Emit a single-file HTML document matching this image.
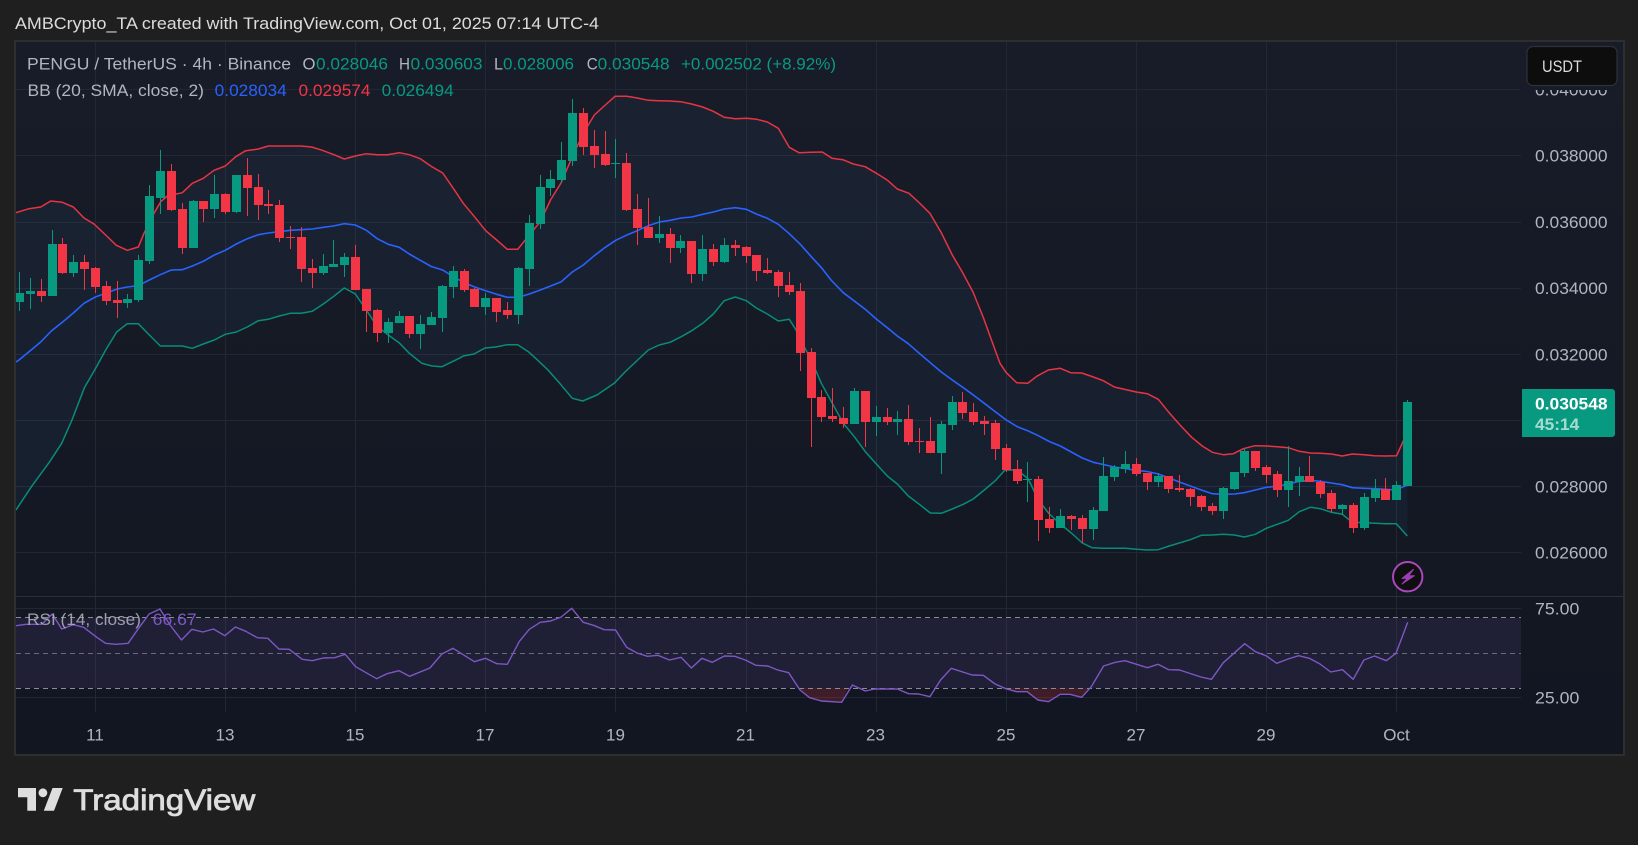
<!DOCTYPE html>
<html><head><meta charset="utf-8"><title>PENGU / TetherUS</title>
<style>
html,body{margin:0;padding:0;background:#1f1f1f;width:1638px;height:845px;overflow:hidden}
svg{display:block}
text{font-family:"Liberation Sans",sans-serif;font-size:17px;fill:#b2b5be}
.g{fill:#089981}.r{fill:#f23645}.b{fill:#2962ff}
</style></head><body>
<svg xmlns="http://www.w3.org/2000/svg" width="1638" height="845" viewBox="0 0 1638 845">
<defs>
<linearGradient id="bg" x1="0" y1="0" x2="0" y2="1"><stop offset="0" stop-color="#181c28"/><stop offset="1" stop-color="#111621"/></linearGradient>
<clipPath id="c"><rect x="16" y="42" width="1505" height="554"/></clipPath>
<clipPath id="c2"><rect x="16" y="597" width="1505" height="116"/></clipPath>
<clipPath id="c3"><rect x="1525" y="90" width="96" height="20"/></clipPath>
</defs>
<rect width="1638" height="845" fill="#1f1f1f"/>
<text x="15" y="29" textLength="584" lengthAdjust="spacingAndGlyphs" style="fill:#dcdcdc">AMBCrypto_TA created with TradingView.com, Oct 01, 2025 07:14 UTC-4</text>
<rect x="15" y="41" width="1609" height="714" fill="url(#bg)" stroke="#2e2e2e" stroke-width="2"/>
<!-- grid -->
<path shape-rendering="crispEdges" fill="none" stroke="#232733" stroke-width="1" d="M16 89.5H1521M16 155.5H1521M16 222.5H1521M16 288.5H1521M16 354.5H1521M16 420.5H1521M16 486.5H1521M16 552.5H1521M16 608.5H1521M16 697.5H1521M95.5 42V712M225.5 42V712M355.5 42V712M485.5 42V712M615.5 42V712M746.5 42V712M876.5 42V712M1006.5 42V712M1136.5 42V712M1266.5 42V712M1396.5 42V712"/>
<path shape-rendering="crispEdges" d="M16 596.5H1623" stroke="#2c303b" stroke-width="1"/>
<!-- band fill -->
<g clip-path="url(#c)">
<polygon fill="#5aa0e8" fill-opacity=".06" points="16,212.6 29,208.7 40.7,207 50.7,201 62.3,202.3 73.3,207 84,218 94,224 105.7,235 116.3,245.3 127.3,250.3 138.3,247 144,233.3 154,213.3 160.7,201.7 167.3,196 182.3,192.7 192.3,183.3 203.3,178.3 214,170.3 225.3,166 235.7,156.7 245.7,150.7 258.3,149 268.3,146 300.7,146 311.7,147 322.3,150.3 334,154.7 344.3,159 355.3,156 366.3,153.7 377.3,154.7 387.3,154.7 399.3,152.7 409.3,154.7 420.3,158.7 431.3,166.4 442.7,173 453.3,188.3 463.3,203.3 475,217.3 485.7,230.7 496.7,240 507.3,249.3 517.7,249.3 529.3,235 540.3,221.7 550.5,200 561,183 572.3,156.7 583.3,133.3 594.3,115 605.3,105 615,96.3 626.7,96.3 637.3,98 648.3,100.3 659.3,100.7 670,101 680.7,101.7 691.7,104 702.7,107 713.3,111.3 724.3,117.3 735.3,118.7 746.7,118.3 756.7,119.3 767.3,122 778.3,128.3 789.3,147.3 799,152.7 811.3,152.3 822.3,152 832,158.3 842.8,159.7 853.4,164 865.2,166.7 876.4,173.3 887.1,180 897.3,189 909,193.3 919.5,203 929.9,213.3 941.6,233.3 952.3,255 963,273.3 973,292 983.5,318 993.3,345 1000,363.3 1006,372.3 1016.7,382.7 1027.7,383.3 1036.7,376.3 1048.3,370 1060.3,368.3 1070.7,372.7 1081.7,373 1092,376.5 1103.3,380.7 1114.3,387 1125.3,389.5 1136.3,392 1147.3,393.7 1158.3,399.3 1168.3,411.7 1180,425 1191.7,437.3 1202.3,446 1212.3,452.3 1223.3,454.7 1233.3,453.7 1243.3,448.7 1255,445.7 1266.7,446 1277.3,446.7 1288.3,447.7 1299.3,451.3 1310.3,453 1320.3,453.3 1331.3,454 1342.3,456 1352.3,454 1364.3,454.7 1374.3,455.7 1385.3,456 1396.5,455.8 1403.3,441 1407.5,429 1407.3,536 1396.3,523.7 1385.3,523.7 1375.3,523.3 1364.3,522.7 1352.3,522.3 1342.3,514.3 1331.3,512.3 1320.3,508.7 1310.3,507.3 1299.3,511.7 1288.3,520.3 1277.3,524.3 1266.3,528.3 1255.3,534.3 1244.3,537 1234.3,535 1223.3,534.3 1212.3,535 1201.3,535.3 1190.3,539.7 1179.3,543 1169.3,546 1158.3,549.7 1147.3,550 1136.3,549.3 1125.3,548.3 1103.3,548.3 1092,547.7 1082.3,543 1071.3,533 1060.3,524 1049.3,514 1038.3,500 1028.3,479 1017.3,470 1005,470 995.3,480.7 984.3,490 973.3,499 963.3,504.3 952.3,509 941.3,513.3 930.3,513 919.3,504.3 908.3,496 897.3,484 887.3,476 876.3,464 865.3,451.7 854.3,436.7 843.3,423.3 832.3,403.3 821.3,383.3 811.3,360 805,348.3 796,330 789.3,319.3 778.3,321 767.3,314 756.3,308 746.3,300.7 735.3,297 724.3,300.7 713.3,314 702.7,323.3 691.7,330.7 681.3,336.7 670,342.3 659.3,345 648.3,350 637.7,360 625,372 614.2,383.3 597,395 582.7,401 572.3,398.3 559.7,383.3 548,370 536.7,359.3 528.3,351.7 517.7,344.7 507.3,344.7 496,347 485,348 474,354 463.3,356 459.2,358.3 442,366.7 432,366 421.9,363.3 409.3,353.3 399.3,343 388.3,335 377.3,326.7 366.3,310 355.3,294 344.3,288 333.3,296.7 323.3,304 312.3,311.3 301.3,313.3 290.3,313.3 279.3,316 268.3,319.3 258.3,320.7 247.3,327 236.3,332 225.3,334.3 214.3,340 203.3,344 192.3,348.3 182.3,346 160.3,346 149.3,335 138.3,323.7 127.3,323.7 116.7,332 105.7,350 94.7,370 84.4,387.7 72,420 61.7,443.3 49.7,461.7 31.4,486.7 16,510"/>
<!-- lower -->
<polyline fill="none" stroke="#089981" stroke-width="1.5" stroke-opacity=".9" stroke-linejoin="round" points="16,510 31.4,486.7 49.7,461.7 61.7,443.3 72,420 84.4,387.7 94.7,370 105.7,350 116.7,332 127.3,323.7 138.3,323.7 149.3,335 160.3,346 182.3,346 192.3,348.3 203.3,344 214.3,340 225.3,334.3 236.3,332 247.3,327 258.3,320.7 268.3,319.3 279.3,316 290.3,313.3 301.3,313.3 312.3,311.3 323.3,304 333.3,296.7 344.3,288 355.3,294 366.3,310 377.3,326.7 388.3,335 399.3,343 409.3,353.3 421.9,363.3 432,366 442,366.7 459.2,358.3 463.3,356 474,354 485,348 496,347 507.3,344.7 517.7,344.7 528.3,351.7 536.7,359.3 548,370 559.7,383.3 572.3,398.3 582.7,401 597,395 614.2,383.3 625,372 637.7,360 648.3,350 659.3,345 670,342.3 681.3,336.7 691.7,330.7 702.7,323.3 713.3,314 724.3,300.7 735.3,297 746.3,300.7 756.3,308 767.3,314 778.3,321 789.3,319.3 796,330 805,348.3 811.3,360 821.3,383.3 832.3,403.3 843.3,423.3 854.3,436.7 865.3,451.7 876.3,464 887.3,476 897.3,484 908.3,496 919.3,504.3 930.3,513 941.3,513.3 952.3,509 963.3,504.3 973.3,499 984.3,490 995.3,480.7 1005,470 1017.3,470 1028.3,479 1038.3,500 1049.3,514 1060.3,524 1071.3,533 1082.3,543 1092,547.7 1103.3,548.3 1125.3,548.3 1136.3,549.3 1147.3,550 1158.3,549.7 1169.3,546 1179.3,543 1190.3,539.7 1201.3,535.3 1212.3,535 1223.3,534.3 1234.3,535 1244.3,537 1255.3,534.3 1266.3,528.3 1277.3,524.3 1288.3,520.3 1299.3,511.7 1310.3,507.3 1320.3,508.7 1331.3,512.3 1342.3,514.3 1352.3,522.3 1364.3,522.7 1375.3,523.3 1385.3,523.7 1396.3,523.7 1407.3,536"/>
<!-- upper -->
<polyline fill="none" stroke="#f23645" stroke-width="1.5" stroke-opacity=".95" stroke-linejoin="round" points="16,212.6 29,208.7 40.7,207 50.7,201 62.3,202.3 73.3,207 84,218 94,224 105.7,235 116.3,245.3 127.3,250.3 138.3,247 144,233.3 154,213.3 160.7,201.7 167.3,196 182.3,192.7 192.3,183.3 203.3,178.3 214,170.3 225.3,166 235.7,156.7 245.7,150.7 258.3,149 268.3,146 300.7,146 311.7,147 322.3,150.3 334,154.7 344.3,159 355.3,156 366.3,153.7 377.3,154.7 387.3,154.7 399.3,152.7 409.3,154.7 420.3,158.7 431.3,166.4 442.7,173 453.3,188.3 463.3,203.3 475,217.3 485.7,230.7 496.7,240 507.3,249.3 517.7,249.3 529.3,235 540.3,221.7 550.5,200 561,183 572.3,156.7 583.3,133.3 594.3,115 605.3,105 615,96.3 626.7,96.3 637.3,98 648.3,100.3 659.3,100.7 670,101 680.7,101.7 691.7,104 702.7,107 713.3,111.3 724.3,117.3 735.3,118.7 746.7,118.3 756.7,119.3 767.3,122 778.3,128.3 789.3,147.3 799,152.7 811.3,152.3 822.3,152 832,158.3 842.8,159.7 853.4,164 865.2,166.7 876.4,173.3 887.1,180 897.3,189 909,193.3 919.5,203 929.9,213.3 941.6,233.3 952.3,255 963,273.3 973,292 983.5,318 993.3,345 1000,363.3 1006,372.3 1016.7,382.7 1027.7,383.3 1036.7,376.3 1048.3,370 1060.3,368.3 1070.7,372.7 1081.7,373 1092,376.5 1103.3,380.7 1114.3,387 1125.3,389.5 1136.3,392 1147.3,393.7 1158.3,399.3 1168.3,411.7 1180,425 1191.7,437.3 1202.3,446 1212.3,452.3 1223.3,454.7 1233.3,453.7 1243.3,448.7 1255,445.7 1266.7,446 1277.3,446.7 1288.3,447.7 1299.3,451.3 1310.3,453 1320.3,453.3 1331.3,454 1342.3,456 1352.3,454 1364.3,454.7 1374.3,455.7 1385.3,456 1396.5,455.8 1403.3,441 1407.5,429"/>
<!-- middle -->
<polyline fill="none" stroke="#2962ff" stroke-width="1.6" stroke-linejoin="round" points="16,362 19,360 29,351.7 40.7,342 51.3,331 62.3,322.3 73.3,313 84,303.3 95.3,297 106.3,293 117.3,289 127.3,287 138.3,285.7 149.3,280 160.3,274.7 171.3,270 182.3,269.7 192.3,266 203.3,261.3 214.3,255 225.3,250.3 236.3,244 247.3,238.7 258.3,234.7 268.3,233 279.3,231.7 290.3,230.3 301.3,229.7 312.3,229 323.3,227.3 333.3,226 344.3,223.7 355.3,225 366.3,230.3 377.3,238.7 388.3,244.3 399.3,247.3 409.3,254 420.3,260.3 431.3,266.5 442.7,270 453.3,276.7 464.3,282.7 474.7,287 485.7,290.7 496.7,294.3 507.3,297.3 518.3,297.3 529.3,294 540.3,290 550.7,286 561.3,281.7 572.3,272 583.3,265 594.3,255.7 605.3,247.3 615.7,240.3 626.3,235.3 637.3,230.7 648.3,225.7 659.3,222 670.3,220.3 681.3,218 691.7,217 702.7,214.3 713.3,212 724.3,209 735.3,207.7 746.3,209.3 756.3,214 767.3,218.3 778.3,224.3 789.3,233.7 800.3,244.3 811.3,256.7 822.3,268.7 831,280 843.3,292.7 854.3,301 865.3,309.3 876.3,319 887.3,327.7 897.3,336 908.3,343.7 919.3,353.3 930.3,362.7 941.3,372 952.3,380 963.3,387.7 973.3,395 984.3,403.3 995.3,411.7 1006.3,420 1017.3,426.7 1028.3,431 1038.3,435.7 1049.3,441.5 1060.3,446 1071.3,452 1082.3,458 1093.3,462.3 1103.3,464.5 1114.3,467 1125.3,468.5 1136.3,470.5 1147.3,471.5 1158.3,474 1169.3,478 1179.3,482 1190.3,486 1201.3,490 1212.3,493.7 1223.3,494.3 1234.3,494 1244.3,492.7 1255.3,490 1266.3,487.3 1277.3,486.3 1288.3,484 1299.3,481.3 1310.3,480.3 1320.3,481.3 1331.3,483 1342.3,484.7 1352.3,487.7 1364.3,488.3 1375.3,488.7 1385.3,489.3 1396.3,490 1403.3,486.7 1407.3,485.3"/>
<!-- candles -->
<g shape-rendering="crispEdges" fill="none">
<path stroke="#089981" stroke-width="1" d="M19.5 272V311M30.5 278V309M52.5 230V296M73.5 255V277M127.5 294V308M138.5 255V302M149.5 185V264M160.5 150V214M193.5 200V248M214.5 175V218M236.5 175V213M323.5 254V275M333.5 240V267M344.5 253V277M388.5 318V343M399.5 311V323M420.5 315V349M431.5 312V325M442.5 285V332M453.5 266V298M485.5 293V315M518.5 267V324M529.5 215V286M540.5 175V229M550.5 170V196M561.5 142V183M572.5 99V166M615.5 139V178M659.5 216V243M680.5 235V253M702.5 235V281M724.5 238V263M854.5 388V424M876.5 406V436M897.5 411V435M941.5 421V474M952.5 396V430M1027.5 462V502M1060.5 509V528M1093.5 507V540M1103.5 457V511M1114.5 465V481M1125.5 451V473M1158.5 473V487M1223.5 487V519M1234.5 472V490M1244.5 448V477M1288.5 446V507M1299.5 467V496M1342.5 504V515M1364.5 493V530M1375.5 479V502M1396.5 481V500M1407.5 400V486"/>
<path stroke="#f23645" stroke-width="1" d="M41.5 279V302M62.5 238V274M84.5 255V290M95.5 267V293M106.5 281V305M117.5 281V318M171.5 164V211M182.5 203V254M203.5 201V222M225.5 193V214M247.5 158V216M258.5 174V220M268.5 190V214M279.5 200V242M290.5 226V249M301.5 227V282M312.5 259V288M355.5 245V290M366.5 289V332M377.5 309V342M409.5 316V338M464.5 269V292M474.5 288V307M496.5 298V322M507.5 302V319M583.5 108V155M594.5 130V168M605.5 131V166M626.5 153V211M637.5 194V245M648.5 198V238M670.5 228V263M691.5 241V283M713.5 244V266M735.5 240V256M746.5 246V263M756.5 255V281M767.5 258V274M778.5 270V297M789.5 272V295M800.5 283V371M811.5 348V447M821.5 390V422M832.5 388V422M843.5 407V428M865.5 391V447M887.5 408V425M908.5 405V445M919.5 428V453M930.5 417V453M962.5 392V419M973.5 403V425M984.5 416V435M995.5 420V460M1006.5 444V472M1017.5 460V484M1038.5 476V541M1049.5 507V533M1071.5 515V530M1082.5 515V543M1136.5 458V476M1147.5 473V490M1168.5 476V493M1179.5 475V492M1190.5 488V506M1201.5 495V511M1212.5 503V515M1255.5 451V471M1266.5 465V483M1277.5 471V497M1309.5 456V482M1320.5 480V498M1331.5 490V512M1353.5 503V533M1385.5 478V500"/>
<path stroke="#089981" stroke-width="9" d="M19.5 293V302M30.5 291V294M52.5 244V296M73.5 262V273M127.5 299V303M138.5 260V300M149.5 196V261M160.5 171V198M193.5 201V248M214.5 194V209M236.5 175V212M323.5 266V273M333.5 264V267M344.5 257V265M388.5 322V333M399.5 316V323M420.5 324V334M431.5 317V325M442.5 286V318M453.5 271V287M485.5 298V307M518.5 268V315M529.5 223V269M540.5 187V224M550.5 179V188M561.5 160V180M572.5 113V161M615.5 163V164M659.5 234V238M680.5 241V248M702.5 249V274M724.5 245V262M854.5 391V424M876.5 417V422M897.5 419V422M941.5 424V453M952.5 402V425M1027.5 479V480M1060.5 516V528M1093.5 510V529M1103.5 476V511M1114.5 467V477M1125.5 464V469M1158.5 476V482M1223.5 488V511M1234.5 472V489M1244.5 451V473M1288.5 481V490M1299.5 476V482M1342.5 505V509M1364.5 497V528M1375.5 489V498M1396.5 485V500M1407.5 402V486"/>
<path stroke="#f23645" stroke-width="9" d="M41.5 291V296M62.5 244V273M84.5 262V269M95.5 268V287M106.5 286V301M117.5 300V303M171.5 171V210M182.5 209V248M203.5 201V209M225.5 194V212M247.5 175V188M258.5 187V205M268.5 204V206M279.5 205V238M290.5 237V238M301.5 237V269M312.5 268V273M355.5 257V290M366.5 289V311M377.5 310V333M409.5 316V334M464.5 271V290M474.5 289V307M496.5 298V312M507.5 310V315M583.5 113V147M594.5 146V155M605.5 154V165M626.5 163V210M637.5 209V228M648.5 227V238M670.5 234V248M691.5 241V274M713.5 249V262M735.5 245V248M746.5 247V256M756.5 255V271M767.5 270V273M778.5 272V286M789.5 285V292M800.5 291V353M811.5 352V398M821.5 397V417M832.5 416V419M843.5 418V424M865.5 391V422M887.5 417V422M908.5 419V442M919.5 441V442M930.5 441V453M962.5 402V413M973.5 412V422M984.5 421V424M995.5 423V449M1006.5 448V470M1017.5 469V481M1038.5 479V520M1049.5 519V528M1071.5 516V519M1082.5 518V529M1136.5 464V474M1147.5 473V482M1168.5 476V489M1179.5 488V490M1190.5 489V497M1201.5 496V507M1212.5 506V511M1255.5 451V468M1266.5 467V475M1277.5 474V490M1309.5 476V482M1320.5 482V494M1331.5 493V509M1353.5 505V528M1385.5 489V500"/>
</g>
</g>
<!-- RSI -->
<g clip-path="url(#c2)">
<rect x="16" y="618" width="1505" height="70" fill="#7e57c2" fill-opacity=".13"/>
<polygon fill="#f23645" fill-opacity=".2" points="797,688 809.6,697.7 821.4,701 841.7,702.3 848,688"/>
<polygon fill="#f23645" fill-opacity=".2" points="1005,688 1016.5,691.7 1027.2,691.7 1037.8,700 1048.5,701.7 1060.3,694.3 1069.9,694.3 1081.7,697.3 1091.3,688"/>
<path shape-rendering="crispEdges" fill="none" stroke="#8b8b96" stroke-width="1" stroke-dasharray="5 4" d="M16 617.5H1521M16 688.5H1521"/>
<path shape-rendering="crispEdges" fill="none" stroke="#6c6c78" stroke-width="1" stroke-dasharray="5 4" d="M16 653.5H1521"/>
<polyline fill="none" stroke="#7e57c2" stroke-width="1.4" stroke-linejoin="round" points="15.7,625.7 26,624.3 41.8,624.3 52.3,614 61.7,629 73.2,624.7 83.7,627.3 96.8,637.3 105.6,643.3 116.1,644.3 128.1,643.3 138.6,628.3 149.1,614 160,609 170,625 181.5,640 191.9,629.3 202.9,632 213.4,629 224.9,635.7 235.4,627 245.8,631.3 257.3,637.7 267.8,638.3 278.8,649 289.2,649.3 302.3,659.3 312.2,660.7 323.2,658 334.7,657.7 345.2,654.3 355.6,666.7 376.6,678.7 387,673.7 399.1,670.7 409.5,676.3 429.9,668 441.9,654 453,648.3 474.4,661.7 485.4,658.3 496.9,663.7 507.3,664.3 519.4,641.3 529.3,629.3 540.3,622.3 550.7,621 561.2,617 571.7,608.3 583.2,622.3 593.6,625.3 604.1,629.7 615.6,630 626.6,647.3 637,653 647.5,656.3 657.9,655.3 669.5,660 681,657.3 691.4,668 701.9,658.3 712.3,662.3 724.4,656 734.8,656.3 745.3,660 755.8,665.3 767.8,666 777.7,670 788.7,672.7 800,690 809.6,697.7 821.4,701 841.7,702.3 852.4,685 865.2,691 874.8,689 897.3,689 908.5,693.7 918.7,694 929.9,696.7 940.6,680 951.3,668.3 972.1,675 983.3,675.3 995.1,684 1005.8,688.7 1016.5,691.7 1027.2,691.7 1037.8,700 1048.5,701.7 1060.3,694.3 1069.9,694.3 1081.7,697.3 1091.3,686.7 1103.6,666 1115.3,662.3 1125,660.7 1147.4,667.7 1158.1,664.3 1168.8,669.7 1179.5,670 1200.9,677 1211.5,679.3 1223.3,662.7 1244.7,643.7 1255.4,651.7 1266.6,656 1276.7,663.3 1288,659 1298.7,655.7 1309.3,658.3 1320,664 1330.7,672 1342.5,669.7 1353.2,679.3 1363.9,660 1374.5,656 1386.3,660.7 1396,653.3 1407.7,622.3"/>
</g>
<text x="27" y="625" textLength="114" lengthAdjust="spacingAndGlyphs" opacity=".85">RSI (14, close)</text>
<text x="152.7" y="625" textLength="44" lengthAdjust="spacingAndGlyphs" style="fill:#7e57c2">66.67</text>
<!-- legend -->
<text x="27" y="69.5" textLength="264" lengthAdjust="spacingAndGlyphs">PENGU / TetherUS · 4h · Binance</text>
<text x="302.5" y="69.5" textLength="13" lengthAdjust="spacingAndGlyphs">O</text>
<text x="316" y="69.5" textLength="72" lengthAdjust="spacingAndGlyphs" class="g">0.028046</text>
<text x="399" y="69.5" textLength="11" lengthAdjust="spacingAndGlyphs">H</text>
<text x="410.5" y="69.5" textLength="72" lengthAdjust="spacingAndGlyphs" class="g">0.030603</text>
<text x="494" y="69.5" textLength="9" lengthAdjust="spacingAndGlyphs">L</text>
<text x="503" y="69.5" textLength="71" lengthAdjust="spacingAndGlyphs" class="g">0.028006</text>
<text x="586.7" y="69.5" textLength="11" lengthAdjust="spacingAndGlyphs">C</text>
<text x="597.6" y="69.5" textLength="72" lengthAdjust="spacingAndGlyphs" class="g">0.030548</text>
<text x="681" y="69.5" textLength="155" lengthAdjust="spacingAndGlyphs" class="g">+0.002502 (+8.92%)</text>
<text x="27.5" y="96" textLength="176.5" lengthAdjust="spacingAndGlyphs">BB (20, SMA, close, 2)</text>
<text x="214.7" y="96" textLength="72" lengthAdjust="spacingAndGlyphs" class="b">0.028034</text>
<text x="298.5" y="96" textLength="72" lengthAdjust="spacingAndGlyphs" class="r">0.029574</text>
<text x="381.7" y="96" textLength="72" lengthAdjust="spacingAndGlyphs" class="g">0.026494</text>
<!-- right axis -->
<g clip-path="url(#c3)"><text x="1535" y="95.5" textLength="72.6" lengthAdjust="spacingAndGlyphs">0.040000</text></g>
<text x="1535" y="161.3" textLength="72.6" lengthAdjust="spacingAndGlyphs">0.038000</text>
<text x="1535" y="228" textLength="72.6" lengthAdjust="spacingAndGlyphs">0.036000</text>
<text x="1535" y="294" textLength="72.6" lengthAdjust="spacingAndGlyphs">0.034000</text>
<text x="1535" y="360.3" textLength="72.6" lengthAdjust="spacingAndGlyphs">0.032000</text>
<text x="1535" y="492.7" textLength="72.6" lengthAdjust="spacingAndGlyphs">0.028000</text>
<text x="1535" y="558.7" textLength="72.6" lengthAdjust="spacingAndGlyphs">0.026000</text>
<text x="1535" y="614.5" textLength="44.3" lengthAdjust="spacingAndGlyphs">75.00</text>
<text x="1535" y="703.7" textLength="44.3" lengthAdjust="spacingAndGlyphs">25.00</text>
<path d="M1522 389H1612a3 3 0 0 1 3 3V434a3 3 0 0 1-3 3H1522Z" fill="#089981"/>
<text x="1535" y="409.3" textLength="72.6" lengthAdjust="spacingAndGlyphs" style="fill:#fff;font-weight:700">0.030548</text>
<text x="1535" y="430" textLength="44.3" lengthAdjust="spacingAndGlyphs" style="fill:#a6dccf;font-weight:700">45:14</text>
<!-- USDT -->
<rect x="1527" y="46.5" width="90" height="39" rx="6" fill="#0d0d0d" stroke="#2f3138" stroke-width="1.2"/>
<text x="1542" y="72" textLength="40" lengthAdjust="spacingAndGlyphs" style="fill:#dbdbdb">USDT</text>
<!-- x axis -->
<g text-anchor="middle">
<text x="95" y="740.5">11</text><text x="225" y="740.5">13</text><text x="355" y="740.5">15</text><text x="485" y="740.5">17</text><text x="615.5" y="740.5">19</text><text x="745.5" y="740.5">21</text><text x="875.5" y="740.5">23</text><text x="1006" y="740.5">25</text><text x="1136" y="740.5">27</text><text x="1266" y="740.5">29</text><text x="1396.5" y="740.5">Oct</text>
</g>
<!-- bolt -->
<circle cx="1407.7" cy="576.7" r="14.7" fill="#0f0f12" stroke="#ab47bc" stroke-width="2"/>
<path d="M1413.4 569.4L1402 578.4H1407.4L1402 584L1414.4 575.7H1408.7Z" fill="#9c3fb5" stroke="#9c3fb5" stroke-width="1" stroke-linejoin="round"/>
<!-- logo -->
<g fill="#dedede">
<path d="M18 788H36V810.7H27.3V797.3H18Z"/>
<circle cx="42.9" cy="792.8" r="4.4"/>
<path d="M52.5 788H62.7L54 810.7H43.8Z"/>
</g>
<text x="73.3" y="810" textLength="182" lengthAdjust="spacingAndGlyphs" style="font-size:30px;fill:#dedede;stroke:#dedede;stroke-width:.8">TradingView</text>
</svg>
</body></html>
